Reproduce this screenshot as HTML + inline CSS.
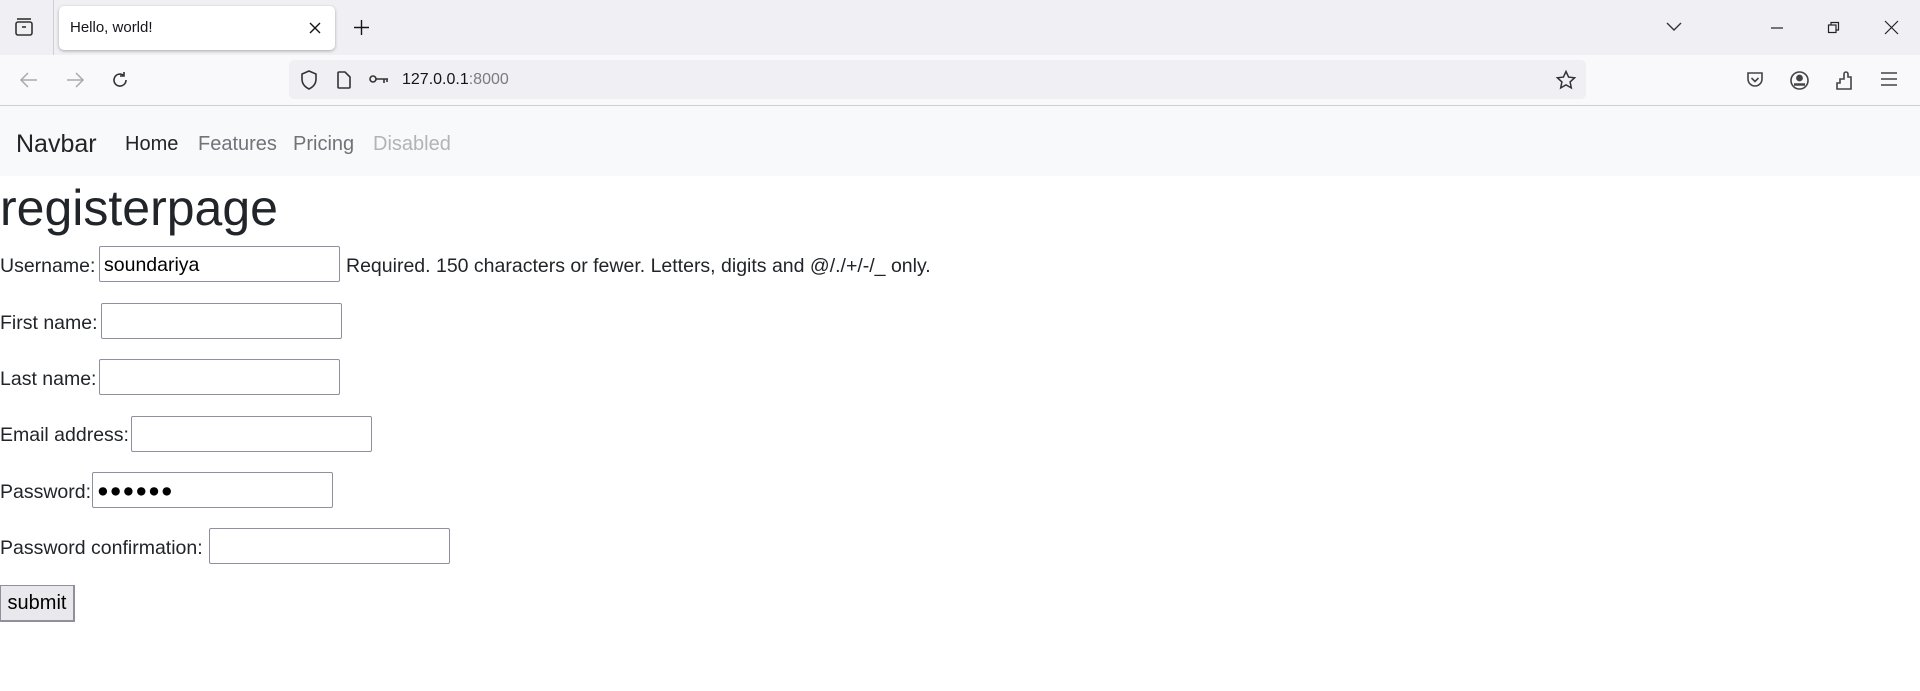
<!DOCTYPE html>
<html><head><meta charset="utf-8"><style>
*{box-sizing:border-box;margin:0;padding:0}
body{width:1920px;height:691px;position:relative;background:#fff;font-family:"Liberation Sans",sans-serif;color:#212529;overflow:hidden}
.abs{position:absolute}
#tabbar{left:0;top:0;width:1920px;height:55px;background:#f0f0f4}
#tab{left:59px;top:6px;width:276px;height:44px;background:#fff;border-radius:5px;box-shadow:0 1px 3px rgba(0,0,0,.3)}
#toolbar{left:0;top:55px;width:1920px;height:51px;background:#f9f9fb;border-bottom:1px solid #cfcfd8}
#url{left:289px;top:60px;width:1297px;height:39px;background:#f0f0f4;border-radius:5px}
#navbar{left:0;top:106px;width:1920px;height:70px;background:#f8f9fa}
.lbl{font-size:19.5px;line-height:24px;color:#212529}
.inp{position:absolute;width:241px;height:36px;border:1px solid #8f8f9d;border-radius:2px;background:#fff;font-size:19.5px;line-height:36px;padding-left:4px;color:#000}
svg{position:absolute;overflow:visible}
</style></head><body>
<div id="tabbar" class="abs"></div>
<svg style="left:14px;top:17px" width="20" height="20" viewBox="0 0 20 20" fill="none" stroke="#333" stroke-width="1.6"><rect x="2" y="5" width="16" height="13" rx="2"/><path d="M3 2h14"/><path d="M8 10h4"/></svg>
<div class="abs" style="left:53px;top:0;width:1px;height:55px;background:#cfcfd8"></div>
<div id="tab" class="abs"></div>
<div class="abs" style="left:70px;top:19px;font-size:15px;color:#15141a">Hello, world!</div>
<svg style="left:309px;top:22px" width="12" height="12" viewBox="0 0 12 12" stroke="#15141a" stroke-width="1.4"><path d="M1 1l10 10M11 1L1 11"/></svg>
<svg style="left:354px;top:20px" width="15" height="15" viewBox="0 0 15 15" stroke="#15141a" stroke-width="1.4"><path d="M7.5 0v15M0 7.5h15"/></svg>
<svg style="left:1666px;top:22px" width="16" height="10" viewBox="0 0 16 10" fill="none" stroke="#333" stroke-width="1.4"><path d="M1 1l7 7 7-7"/></svg>
<svg style="left:1771px;top:27px" width="12" height="2" viewBox="0 0 12 2" stroke="#222" stroke-width="1.2"><path d="M0 1h12"/></svg>
<svg style="left:1828px;top:22px" width="11" height="11" viewBox="0 0 11 11" fill="none" stroke="#222" stroke-width="1.2"><rect x="0.5" y="3" width="7.5" height="7.5"/><path d="M3 3V0.5h7.5V8H8"/></svg>
<svg style="left:1885px;top:21px" width="13" height="13" viewBox="0 0 13 13" stroke="#222" stroke-width="1.2"><path d="M0 0l13 13M13 0L0 13"/></svg>
<div id="toolbar" class="abs"></div>
<svg style="left:20px;top:72px" width="18" height="16" viewBox="0 0 18 16" fill="none" stroke="#aaa" stroke-width="1.5"><path d="M17 8H2M8 1L1 8l7 7"/></svg>
<svg style="left:66px;top:72px" width="18" height="16" viewBox="0 0 18 16" fill="none" stroke="#aaa" stroke-width="1.5"><path d="M1 8h15M10 1l7 7-7 7"/></svg>
<svg style="left:111px;top:71px" width="18" height="18" viewBox="0 0 18 18" fill="none" stroke="#333" stroke-width="1.6"><path d="M15 9A6 6 0 1 1 12.5 4.2"/><path d="M13 1v4h-4"/></svg>
<div id="url" class="abs"></div>
<svg style="left:300px;top:70px" width="18" height="20" viewBox="0 0 18 20" fill="none" stroke="#333" stroke-width="1.6"><path d="M9 1L2 4v5c0 5 3 8 7 10 4-2 7-5 7-10V4z"/></svg>
<svg style="left:337px;top:71px" width="14" height="18" viewBox="0 0 14 18" fill="none" stroke="#333" stroke-width="1.6"><path d="M2 1h6l5 5v10a1 1 0 0 1-1 1H2a1 1 0 0 1-1-1V2a1 1 0 0 1 1-1z"/></svg>
<svg style="left:369px;top:74px" width="20" height="11" viewBox="0 0 20 11" fill="none" stroke="#333" stroke-width="1.6"><circle cx="4" cy="5" r="3"/><path d="M7 5h12M15 5v4M18 5v3"/></svg>
<div class="abs" style="left:402px;top:71px;font-size:16px;color:#15141a">127.0.0.1<span style="color:#7a7a80">:8000</span></div>
<svg style="left:1556px;top:70px" width="20" height="20" viewBox="0 0 20 20" fill="none" stroke="#333" stroke-width="1.5"><path d="M10 1.5l2.6 5.6 6 .7-4.5 4.1 1.2 6-5.3-3-5.3 3 1.2-6L1.4 7.8l6-.7z"/></svg>
<svg style="left:1746px;top:71px" width="18" height="18" viewBox="0 0 18 18" fill="none" stroke="#444" stroke-width="1.6"><path d="M2 2h14v6a7 7 0 0 1-14 0z"/><path d="M5.5 7l3.5 3.5L12.5 7"/></svg>
<svg style="left:1790px;top:71px" width="19" height="19" viewBox="0 0 19 19" fill="none" stroke="#444" stroke-width="1.6"><circle cx="9.5" cy="9.5" r="8.5"/><circle cx="9.5" cy="7" r="2.6" fill="#444"/><path d="M4 13.5h11" stroke-width="2.5"/></svg>
<svg style="left:1836px;top:70px" width="16" height="20" viewBox="0 0 16 20" fill="none" stroke="#444" stroke-width="1.6"><path d="M1 19v-6h3V9h4V4a2 2 0 0 1 4 0v3h3v12z"/></svg>
<svg style="left:1881px;top:72px" width="16" height="14" viewBox="0 0 16 14" stroke="#444" stroke-width="1.5"><path d="M0 1h16M0 7h16M0 13h16"/></svg>
<div id="navbar" class="abs"></div>
<div class="abs" style="left:16px;top:129px;font-size:25px;line-height:30px;color:#212529">Navbar</div>
<div class="abs" style="left:125px;top:132px;font-size:20px;line-height:24px;color:#212529">Home</div>
<div class="abs" style="left:198px;top:132px;font-size:20px;line-height:24px;color:#707479">Features</div>
<div class="abs" style="left:293px;top:132px;font-size:20px;line-height:24px;color:#707479">Pricing</div>
<div class="abs" style="left:373px;top:132px;font-size:20px;line-height:24px;color:#b1b4b7">Disabled</div>
<div class="abs" style="left:0;top:178px;font-size:50px;line-height:60px;color:#212529">registerpage</div>

<div class="abs lbl" style="left:0;top:254px">Username:</div>
<div class="inp" style="left:99px;top:246px">soundariya</div>
<div class="abs lbl" style="left:346px;top:254px">Required. 150 characters or fewer. Letters, digits and @/./+/-/_ only.</div>
<div class="abs lbl" style="left:0;top:311px">First name:</div>
<div class="inp" style="left:101px;top:303px"></div>
<div class="abs lbl" style="left:0;top:367px">Last name:</div>
<div class="inp" style="left:99px;top:359px"></div>
<div class="abs lbl" style="left:0;top:423px">Email address:</div>
<div class="inp" style="left:131px;top:416px"></div>
<div class="abs lbl" style="left:0;top:480px">Password:</div>
<div class="inp" style="left:92px;top:472px;letter-spacing:1px">●●●●●●</div>
<div class="abs lbl" style="left:0;top:536px">Password confirmation:</div>
<div class="inp" style="left:209px;top:528px"></div>
<div class="abs" style="left:0;top:585px;width:75px;height:37px;background:#e9e9ed;border:1px solid #8f8f9d;border-right:2px solid #8f8f9d;border-bottom:2px solid #8f8f9d;font-size:20px;line-height:35px;text-align:center;color:#000">submit</div>
</body></html>
